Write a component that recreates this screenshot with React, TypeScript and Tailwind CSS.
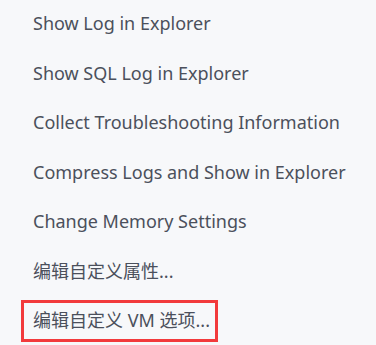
export default function App() {
  const items = [
    "Show Log in Explorer",
    "Show SQL Log in Explorer",
    "Collect Troubleshooting Information",
    "Compress Logs and Show in Explorer",
    "Change Memory Settings",
    "编辑自定义属性...",
  ];
  return (
    <div
      className="w-[376px] h-[345px] bg-[#f7f8fa] overflow-hidden text-[#4b505c] text-[18px]"
      style={{ fontFamily: '"Noto Sans", "Noto Sans CJK SC", sans-serif' }}
    >
      <div className="flex flex-col -mt-[1px]">
        {items.map((t) => (
          <div key={t} className="h-[49.5px] flex items-center pl-[33px] whitespace-nowrap">
            {t}
          </div>
        ))}
        <div className="h-[49.5px] flex items-center pl-[21px]">
          <div className="w-[197px] h-[42px] border-[3px] border-[#f23a3c] flex items-center pl-[9px] whitespace-nowrap">
            编辑自定义 VM 选项...
          </div>
        </div>
      </div>
    </div>
  );
}
